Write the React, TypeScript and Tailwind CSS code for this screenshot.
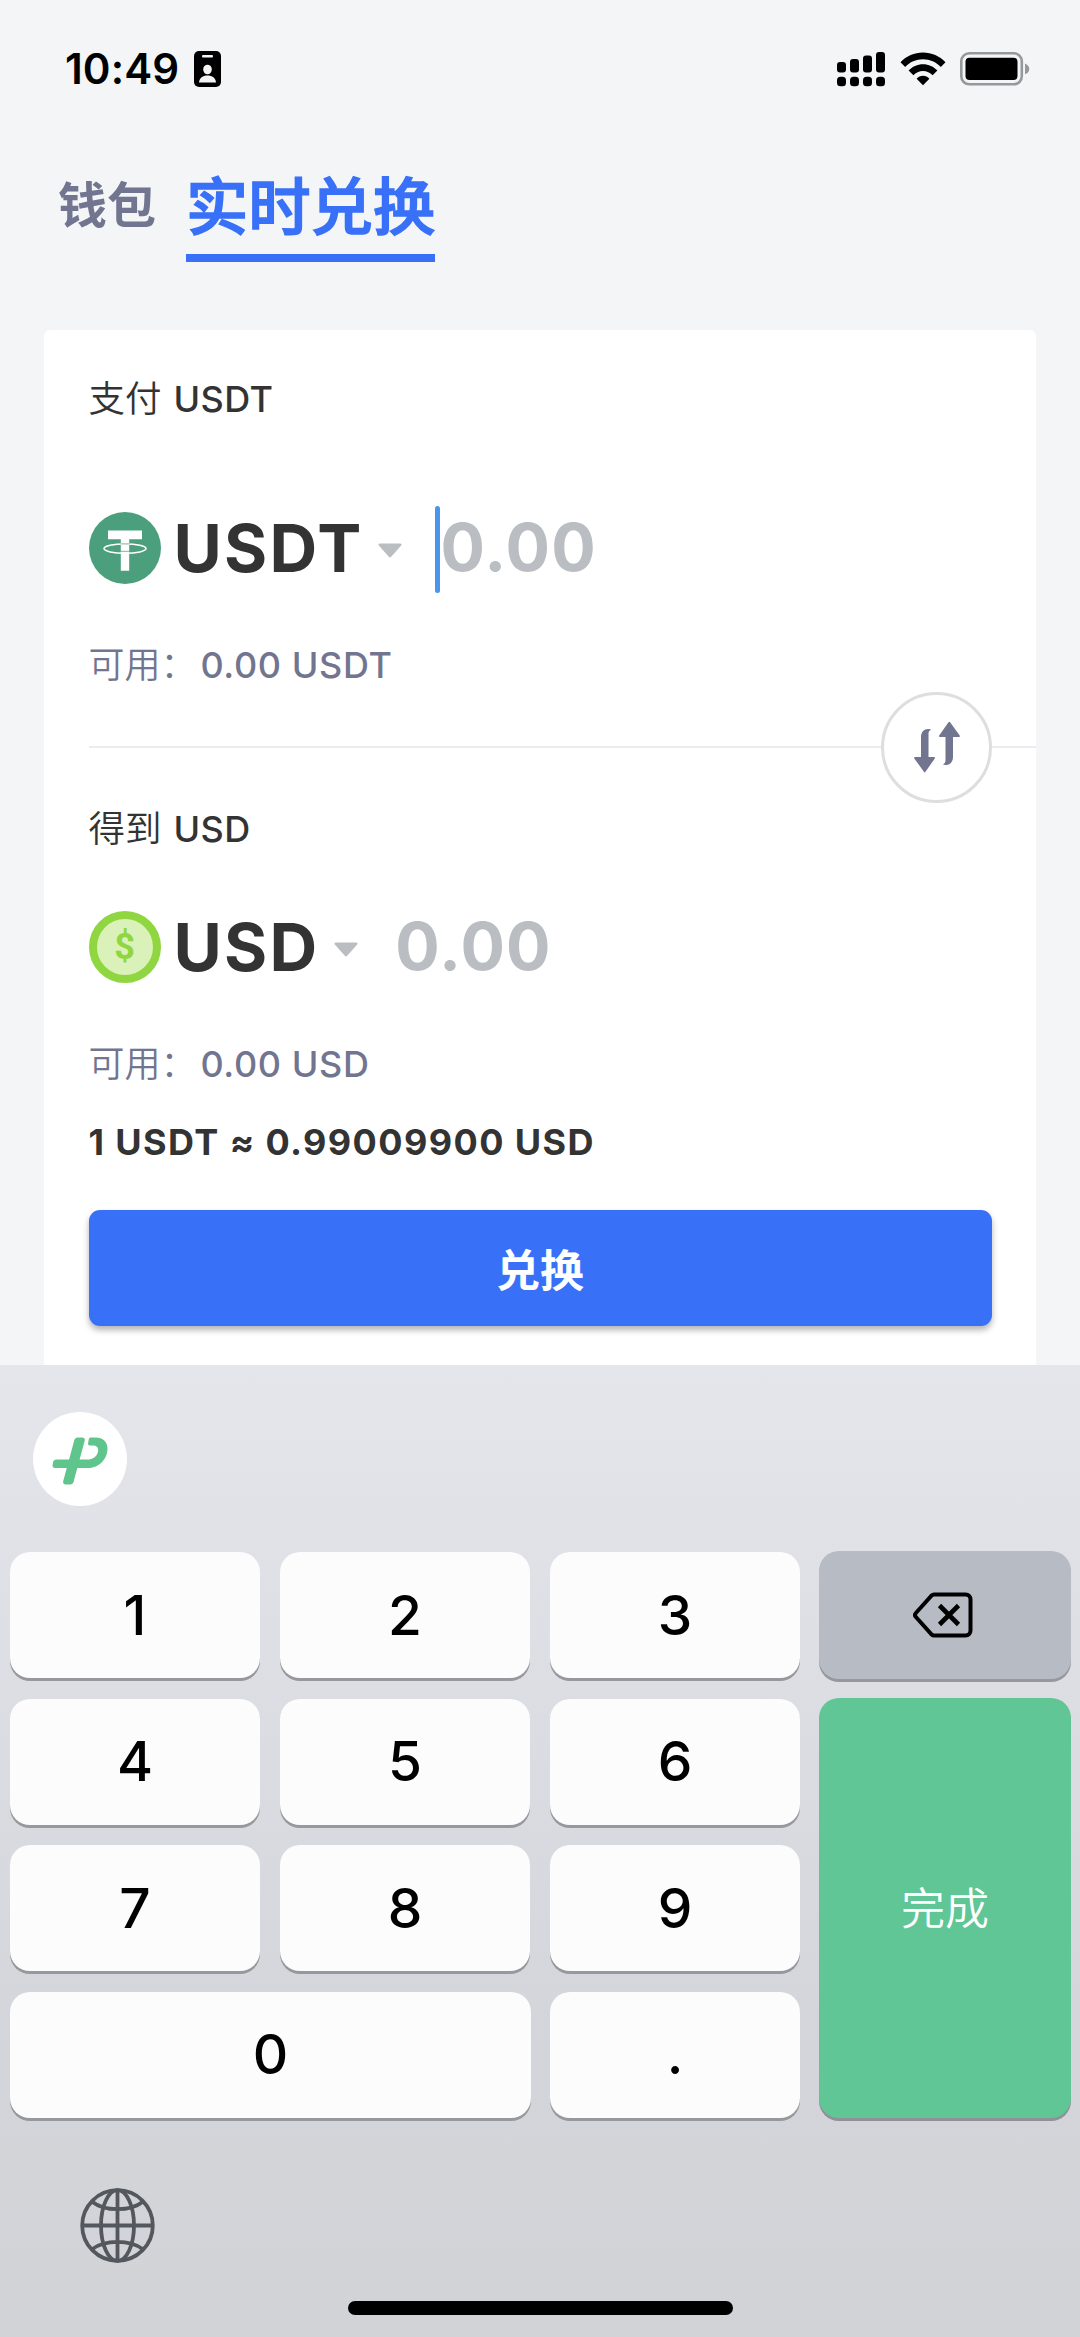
import type { ReactNode } from "react";

const FONT = "font-['Inter','Noto_Sans_CJK_SC',sans-serif]";

function StatusBar() {
  return (
    <header className="flex h-[138px] items-center pl-[65px] pr-[50px] text-black">
      <span className="w-[129px] text-[42px] font-semibold leading-none tracking-[0.1px]">10:49</span>
      <svg width="27" height="36" viewBox="0 0 27 36" aria-hidden="true">
        <rect width="27" height="36" rx="5" fill="#000" />
        <rect x="8" y="4" width="11" height="2.6" rx="1" fill="#f3f5f7" />
        <ellipse cx="13.5" cy="18.5" rx="4.3" ry="4.8" fill="#f3f5f7" />
        <path d="M5 31.5c.4-4.300 3.800-6.900 8.500-6.900s8.100 2.600 8.500 6.900z" fill="#f3f5f7" />
      </svg>
      <div className="ml-auto flex items-center">
        <svg width="48" height="36" viewBox="0 0 48 36" aria-hidden="true">
          <rect x="0" y="11" width="9" height="10.500" rx="3" />
          <rect x="13" y="8" width="9" height="13.500" rx="3" />
          <rect x="26" y="4.500" width="9" height="17" rx="3" />
          <rect x="39" y="1" width="9" height="20.500" rx="3" />
          <rect x="0" y="25.800" width="9" height="9.500" rx="3.500" />
          <rect x="13" y="25.800" width="9" height="9.500" rx="3.500" />
          <rect x="26" y="25.800" width="9" height="9.500" rx="3.500" />
          <rect x="39" y="25.800" width="9" height="9.500" rx="3.500" />
        </svg>
        <svg className="ml-[15px]" width="46" height="34" viewBox="0 0 46 34" aria-hidden="true">
          <path d="M.5 10.200C6.400 4 14.300.5 23 .5s16.600 3.500 22.500 9.700l-4.700 4.800C36.200 10.100 29.900 7.300 23 7.300S9.800 10.100 5.200 15z" />
          <path d="M8.600 18.500c3.700-4 8.800-6.300 14.400-6.300s10.700 2.300 14.400 6.300l-4.800 4.800c-2.400-2.700-5.800-4.300-9.600-4.300s-7.200 1.600-9.600 4.300z" />
          <path d="M16.600 26.700c1.600-1.800 3.900-2.900 6.400-2.900s4.800 1.100 6.400 2.900L23 33.300z" />
        </svg>
        <svg className="ml-[14px]" width="70" height="34" viewBox="0 0 70 34" aria-hidden="true">
          <rect x="1.300" y="1.300" width="60.500" height="31" rx="8" fill="none" stroke="#97989b" strokeWidth="2.600" />
          <rect x="5.500" y="5.700" width="52" height="22.300" rx="4" />
          <path d="M65 11.500c2.600.9 4.300 3 4.300 5.400s-1.700 4.500-4.300 5.400z" fill="#97989b" />
        </svg>
      </div>
    </header>
  );
}

function UsdtIcon() {
  return (
    <svg width="72" height="72" viewBox="0 0 72 72" aria-hidden="true">
      <circle cx="36" cy="36" r="36" fill="#4c9f7d" />
      <path d="M19 18.500h34v8.700H40.200v31.600h-8.400V27.200H19z" fill="#fff" />
      <ellipse cx="36" cy="36.600" rx="21" ry="4.700" fill="none" stroke="#fff" strokeWidth="1.500" />
      <path d="M31.500 31.200h9v1.300h-9zM31.500 38.700h9v1.300h-9z" fill="#4c9f7d" opacity=".6" />
    </svg>
  );
}

function UsdIcon() {
  return (
    <div className="flex h-[72px] w-[72px] items-center justify-center rounded-full border-8 border-[#8fd640] bg-[#daf2b9] font-['Roboto',sans-serif] text-[36px] font-bold leading-none text-[#8fd640]">
      $
    </div>
  );
}

type CurrencyRowProps = {
  icon: ReactNode;
  code: string;
  focused?: boolean;
};

function CurrencyRow({ icon, code, focused }: CurrencyRowProps) {
  return (
    <div className="flex h-[88px] items-center">
      {icon}
      <span className="ml-[13px] text-[66px] font-bold leading-none tracking-[2.200px] text-[#333333]">{code}</span>
      <svg className="ml-[15px] mt-[4px]" width="24" height="15" viewBox="0 0 24 15" aria-hidden="true">
        <path d="M1.800.5h20.400c1.300 0 1.800 1.200 1 2.100L13.200 13.800c-.7.8-1.700.8-2.400 0L.8 2.600C0 1.700.5.500 1.800.500z" fill="#babec2" />
      </svg>
      <div className="ml-[33px] flex items-center">
        <div className={focused ? "mt-[2px] h-[87px] w-[5px] rounded-full bg-[#4a95ee]" : "h-[86px] w-[4px]"} />
        <span className="pb-[3px] text-[66px] font-bold leading-none tracking-[1.200px] text-[#babec2]">0.00</span>
      </div>
    </div>
  );
}

function SwapButton() {
  return (
    <div className="flex h-[110px] items-center">
      <div className="h-[2px] flex-1 bg-[#ebecf0]" />
      <button className="flex h-[111px] w-[111px] items-center justify-center rounded-full border-[3px] border-[#dedede] bg-white">
        <svg width="46" height="52" viewBox="0 0 46 52" fill="#71758f" aria-hidden="true">
          <path d="M7 36V16c0-5 3-8 7-8 1.500 0 2.600.2 3.200.7-1.800.6-2.700 1.800-2.700 4V36h5.700c.7 0 1 .8.600 1.400L11.500 50.800c-.5.700-1.100.7-1.600 0L.3 37.400C-.1 36.800.2 36 .9 36z" />
          <path d="M39 16v20c0 5-3 8-7 8-1.500 0-2.600-.2-3.200-.7 1.800-.6 2.700-1.800 2.700-4V16h-5.700c-.7 0-1-.8-.6-1.400L34.500 1.200c.5-.7 1.100-.7 1.600 0l9.600 13.400c.4.6.1 1.400-.6 1.400z" />
        </svg>
      </button>
      <div className="h-[2px] w-[44px] bg-[#ebecf0]" />
    </div>
  );
}

function Available({ amount }: { amount: string }) {
  return (
    <p className="mt-[46px] flex h-[54px] items-center text-[36px] leading-[54px] text-[#71758f]">
      <span className="w-[112px] font-[350]">可用：</span>
      <span className="font-medium tracking-[0.600px]">{amount}</span>
    </p>
  );
}

function Label({ text, code }: { text: string; code: string }) {
  return (
    <p className="flex h-[54px] text-[36px] leading-[54px] text-[#333333]">
      <span className="w-[85px] text-[36.500px] font-[350]">{text}</span>
      <span className="font-medium tracking-[0.400px]">{code}</span>
    </p>
  );
}

function Key({ label, wide }: { label: string; wide?: boolean }) {
  return (
    <button
      className={`flex items-center justify-center rounded-[20px] bg-[#fcfcfc] text-[55px] font-medium leading-none text-black shadow-[0_3px_0_#97989d] ${
        wide ? "col-span-2 mr-[-1px]" : ""
      }`}
    >
      {label}
    </button>
  );
}

function Keyboard() {
  return (
    <div className="flex h-[972px] flex-col bg-gradient-to-b from-[#e5e6eb] via-[#d4d5da] via-70% to-[#d2d3d7]">
      <div className="ml-[33px] mt-[47px] flex h-[94px] w-[94px] items-center justify-center rounded-full bg-white">
        <svg className="mt-[4px]" width="56" height="48" viewBox="0 0 56 48" fill="#5fc58c" aria-hidden="true">
          <path d="M26 .5h4c2 0 3.200 1.200 2.700 3.200L21.600 44.800c-.5 1.700-1.600 2.700-3.400 2.700h-4.500c-2 0-3-1.200-2.500-3.200L22.300 3.200C22.800 1.500 24 .5 26 .5z" />
          <path d="M38.500.5h5.200C51 .5 55.500 5 55.500 11.500 55.500 22 47 31 36.500 31H3C1 31 .2 29.700.6 27.800l.5-2.500C1.500 23.300 2.600 22.400 4.500 22.400h32c5.500 0 9.700-4.500 9.700-9.400 0-3-2-4.500-4.700-4.500h-3.600c-1.500 0-2.200-1-1.800-2.500l.6-3.200C37 1.300 37.500.5 38.500.5z" />
        </svg>
      </div>

      <div className="mx-[10px] mt-[46px] grid h-[565px] grid-cols-[250px_250px_250px_251px] grid-rows-[126px_126px_126px_126px] gap-x-[20px] gap-y-[20.500px]">
        <Key label="1" />
        <Key label="2" />
        <Key label="3" />
        <button className="-mb-[1px] -ml-[1px] -mt-[1px] flex items-center justify-center rounded-[20px] bg-[#b7bcc4] shadow-[0_3px_0_#97989d]">
          <svg className="-ml-[4px]" width="60" height="46" viewBox="0 0 60 46" fill="none" stroke="#000" strokeWidth="4" aria-hidden="true">
            <path d="M21 2.500h31.500c3 0 5 2 5 5v31c0 3-2 5-5 5H21c-1 0-1.700-.4-2.300-1L2.900 25c-1.200-1.300-1.200-2.700 0-4L18.700 3.500c.6-.6 1.300-1 2.300-1z" />
            <path d="m26.500 13.500 19 19m0-19-19 19" strokeWidth="4.600" />
          </svg>
        </button>
        <Key label="4" />
        <Key label="5" />
        <Key label="6" />
        <button className="row-span-3 -ml-[1px] -mt-[1px] flex items-center justify-center rounded-[20px] bg-[#60c696] pt-[2px] text-[44px] font-[350] leading-none text-white shadow-[0_3px_0_#8f9098]">
          完成
        </button>
        <Key label="7" />
        <Key label="8" />
        <Key label="9" />
        <Key label="0" wide />
        <Key label="." />
      </div>

      <svg className="ml-[80px] mt-[71px]" width="75" height="75" viewBox="0 0 75 75" fill="none" stroke="#53575e" strokeWidth="3.800" aria-hidden="true">
        <circle cx="37.500" cy="37.500" r="35.300" />
        <ellipse cx="37.500" cy="37.500" rx="16.500" ry="35.300" />
        <path d="M37.500 2v71M2 37.500h71M12.500 14c6 4.700 14.500 7.200 25 7.200s19-2.500 25-7.200M12.500 61c6-4.700 14.500-7.200 25-7.200s19 2.500 25 7.200" />
      </svg>
      <div className="mx-auto mb-[22px] mt-auto h-[14px] w-[385px] rounded-full bg-black" />
    </div>
  );
}

export default function App() {
  return (
    <div className={`flex h-[2337px] w-[1080px] flex-col overflow-hidden bg-[#f3f5f7] ${FONT}`}>
      <StatusBar />
      <nav className="flex h-[192px] items-start pl-[58px] pt-[24px]">
        <span className="w-[128px] text-[49px] font-bold leading-[88px] text-[#71758f]">钱包</span>
        <span className="border-b-8 border-[#3871f7] text-[62.300px] font-medium leading-[92px] text-[#3871f7] [-webkit-text-stroke:1.5px_#3871f7]">
          实时兑换
        </span>
      </nav>

      <main className="ml-[44px] flex h-[1035px] w-[992px] flex-col rounded-t-[6px] bg-white pl-[44.500px] pt-[42px]">
        <Label text="支付" code="USDT" />
        <div className="mt-[78px]">
          <CurrencyRow icon={<UsdtIcon />} code="USDT" focused />
        </div>
        <Available amount="0.00 USDT" />
        <SwapButton />
        <Label text="得到" code="USD" />
        <div className="mt-[47px]">
          <CurrencyRow icon={<UsdIcon />} code="USD" />
        </div>
        <Available amount="0.00 USD" />
        <p className="mt-[24px] h-[54px] text-[36px] font-bold leading-[54px] tracking-[1.400px] text-[#333333]">
          1 USDT ≈ 0.99009900 USD
        </p>
        <button className="mt-[41px] h-[116px] w-[903px] rounded-[11px] bg-[#3871f7] pt-[5px] text-[44px] font-bold text-white shadow-[0_4px_6px_rgba(0,0,0,0.3)]">
          兑换
        </button>
      </main>

      <Keyboard />
    </div>
  );
}
